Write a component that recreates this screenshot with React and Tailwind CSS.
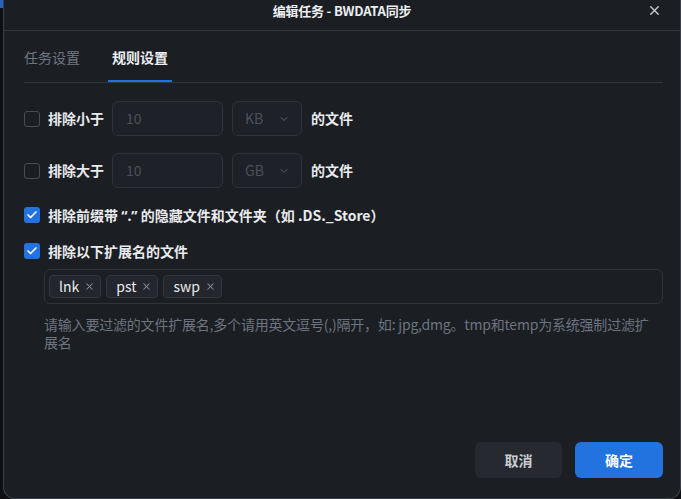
import { X, ChevronDown, Check } from 'lucide-react'

const FONT = { fontFamily: '"Noto Sans CJK SC", "Noto Sans", sans-serif' }
const LATIN = { fontFamily: '"Noto Sans", sans-serif' }

const TAGS = ['lnk', 'pst', 'swp']

function Checkbox({ checked }) {
  if (checked) {
    return (
      <span className="w-4 h-4 rounded-[3px] bg-[#2272e0] flex items-center justify-center shrink-0">
        <Check size={12} strokeWidth={3.5} className="text-white" />
      </span>
    )
  }
  return <span className="w-4 h-4 rounded-[3px] border border-[#474c54] shrink-0" />
}

function SizeRow({ label, unit }) {
  return (
    <div className="flex items-center h-[35px]">
      <Checkbox />
      <span className="ml-2 text-[14px] font-bold text-[#e8eaed] w-[64px]">{label}</span>
      <div className="w-[111px] h-full rounded-md border border-[#2f333a] bg-[#1e2127] flex items-center px-[13px] text-[14px] text-[#4b515b]">
        10
      </div>
      <div className="ml-[9px] w-[70px] h-full rounded-md border border-[#2f333a] bg-[#1e2127] flex items-center justify-between pl-[12px] pr-[11px] text-[14px] text-[#4b515b]">
        {unit}
        <ChevronDown size={12} strokeWidth={2} className="text-[#5d636d]" />
      </div>
      <span className="ml-[9px] text-[14px] font-bold text-[#e8eaed]">的文件</span>
    </div>
  )
}

export default function App() {
  return (
    <div style={FONT} className="w-[681px] h-[499px] flex bg-[#0e1013] overflow-hidden">
      <div className="w-[3px] flex flex-col">
        <div className="h-2 bg-[#2a62c0]" />
      </div>
      <div className="flex-1 flex flex-col bg-[#1b1e23] border-l border-r border-b border-[#3c4149] rounded-b-xl">
        <div className="h-[31px] border-b border-[#32363d] relative flex items-center justify-center pb-[8px]">
          <span className="text-[13px] font-bold text-[#eceef1] tracking-[-0.2px]">编辑任务 - BWDATA同步</span>
          <X size={15} strokeWidth={2.2} className="absolute right-[18px] top-[3px] text-[#c9ccd2]" />
        </div>

        <div className="pl-5 pr-[17px] flex flex-col flex-1">
          <div className="flex gap-7 pt-[16px] border-b border-[#32363d]">
            <div className="pb-[13px] border-b-2 border-transparent text-[14px] leading-5 text-[#6f7783]">任务设置</div>
            <div className="px-1 pb-[13px] border-b-2 border-[#2272e0] text-[14px] leading-5 font-bold text-[#eceef1]">规则设置</div>
          </div>

          <div className="mt-[18px] flex flex-col gap-[17px]">
            <SizeRow label="排除小于" unit="KB" />
            <SizeRow label="排除大于" unit="GB" />
          </div>

          <div className="mt-[17px] flex items-center h-5 gap-2">
            <Checkbox checked />
            <span className="whitespace-nowrap text-[14px] font-bold text-[#e8eaed]">
              排除前缀带 <span style={LATIN}>“.”</span> 的隐藏文件和文件夹（如 .DS._Store）
            </span>
          </div>
          <div className="mt-4 flex items-center h-5 gap-2">
            <Checkbox checked />
            <span className="text-[14px] font-bold text-[#e8eaed]">排除以下扩展名的文件</span>
          </div>

          <div className="ml-5 mt-2 h-[35px] rounded-md border border-[#2f333a] flex items-center gap-[5px] px-1">
            {TAGS.map(t => (
              <span key={t} className="h-[23px] rounded-[4px] border border-[#33373e] bg-[#23262c] flex items-center gap-[5px] pl-[9px] pr-[5px] text-[14px] text-[#e8eaed]">
                {t}
                <X size={11} strokeWidth={2.2} className="text-[#8b919a]" />
              </span>
            ))}
          </div>

          <p className="ml-5 mt-[11px] text-[14px] leading-[18px] tracking-[-0.2px] text-[#6c7480]">
            请输入要过滤的文件扩展名,多个请用英文逗号(,)隔开，如: jpg,dmg。tmp和temp为系统强制过滤扩<br />展名
          </p>

          <div className="flex-1" />

          <div className="flex justify-end gap-[13px] pb-5">
            <button className="w-[87px] h-[36px] rounded-md bg-[#26292f] text-[14px] font-bold text-[#c8ccd2]">取消</button>
            <button className="w-[88px] h-[36px] rounded-md bg-[#2272e0] text-[14px] font-bold text-white">确定</button>
          </div>
        </div>
      </div>
    </div>
  )
}
